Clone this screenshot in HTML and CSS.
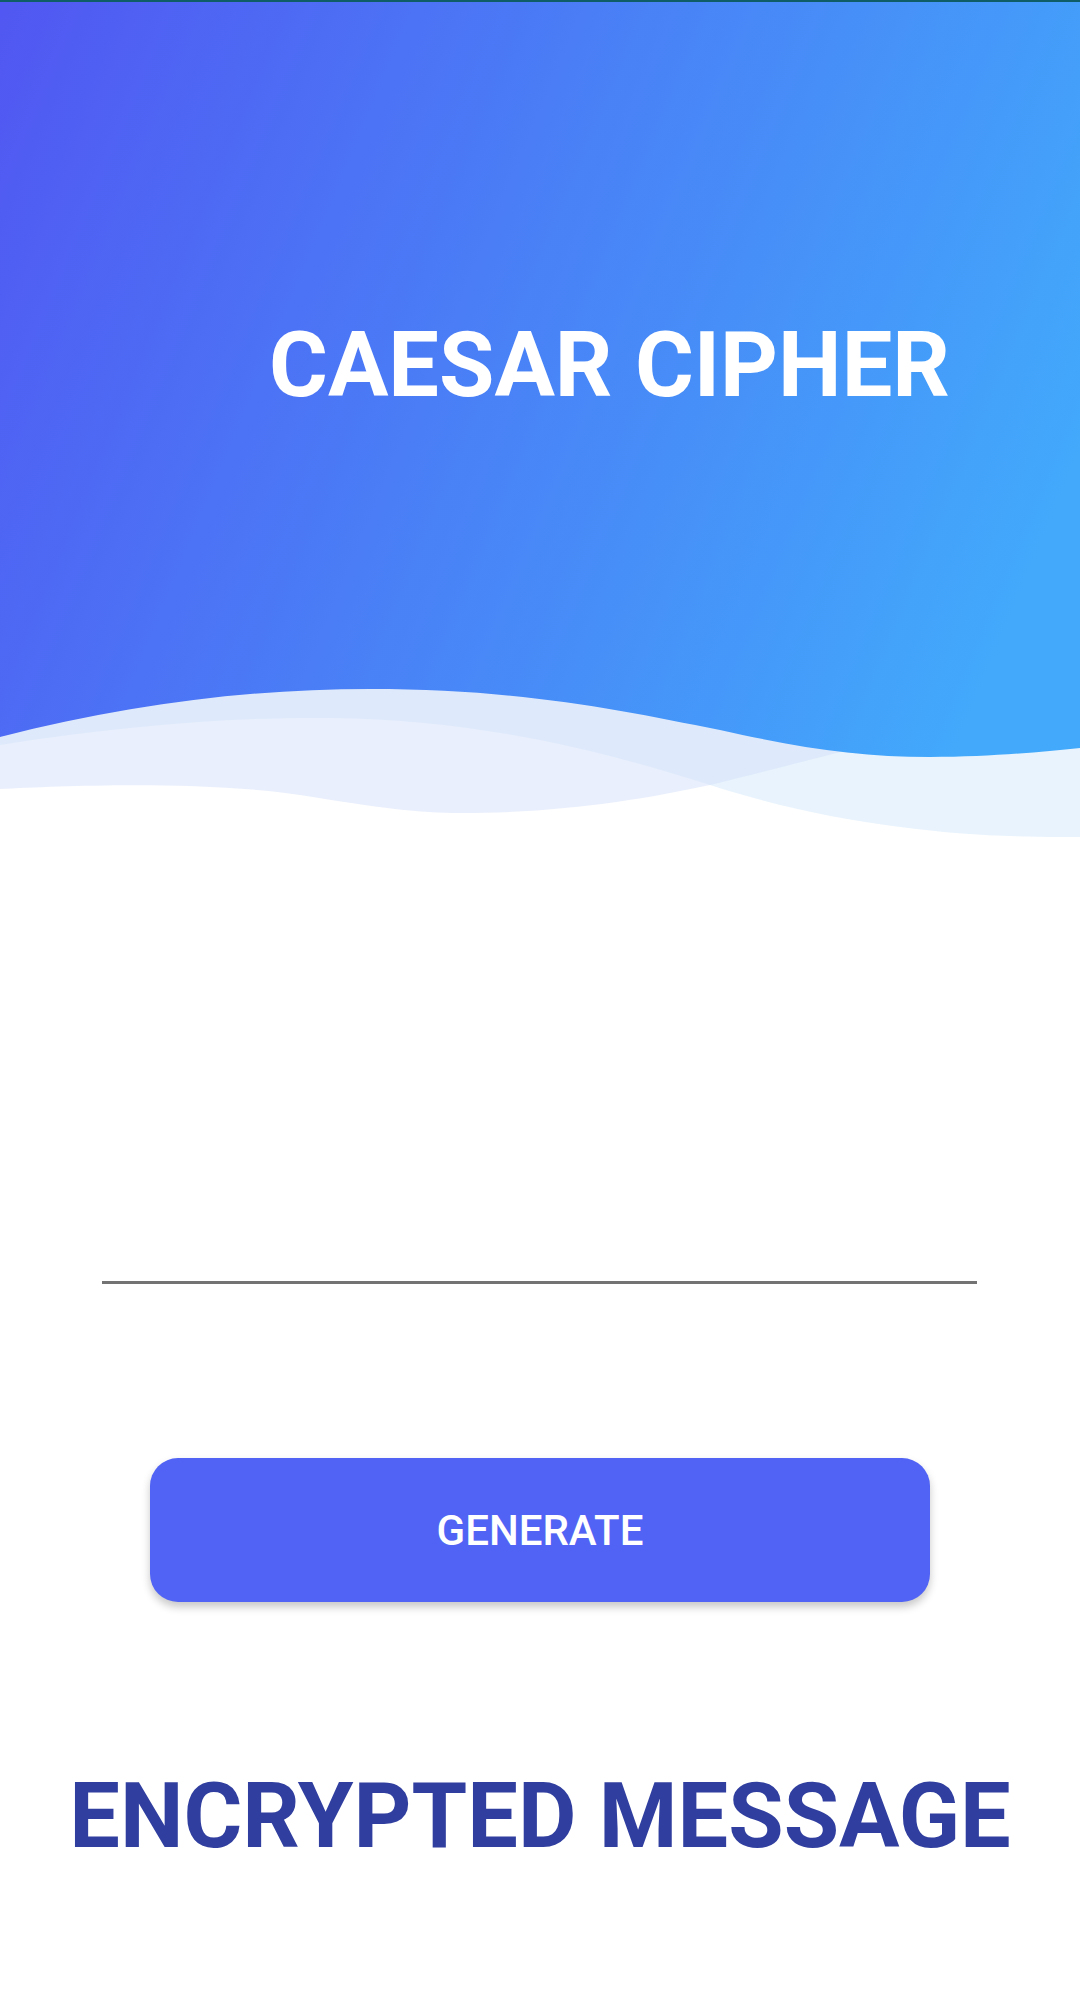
FILE: index.html
```html
<!DOCTYPE html>
<html>
<head>
<meta charset="utf-8">
<title>Caesar Cipher</title>
<link rel="stylesheet" href="styles.css">
</head>
<body>
<div class="statusline"></div>
<header class="hero">
  <svg class="hero-bg" width="1080" height="858" viewBox="0 2 1080 858" xmlns="http://www.w3.org/2000/svg">
    <defs>
      <linearGradient id="g" gradientUnits="userSpaceOnUse" x1="0" y1="0" x2="1080" y2="450">
        <stop offset="0" stop-color="#5157F2"/>
        <stop offset="1" stop-color="#42A9FB"/>
      </linearGradient>
    </defs>
    <path d="M0,600 L1080,600 L1080,837 C980,838 850,830 710,785 C600,750 480,720 330,718 C230,717 120,726 0,745 Z" fill="#d2e8fc" fill-opacity="0.5"/>
    <path d="M0,600 L1080,600 L1080,650 C960,700 880,740 840,752 C800,762 760,773 710,785 C640,800 560,813 460,813 C420,813 380,808 300,795 C200,780 60,786 0,789 Z" fill="#d3e0fa" fill-opacity="0.5"/>
    <path d="M0,0 L1080,0 L1080,748 C1040,752 990,757 930,757 C860,757 800,748 720,730 C620,710 520,689 370,689 C250,689 130,704 0,737 Z" fill="url(#g)"/>
  </svg>
  <h1 class="title">CAESAR CIPHER</h1>
</header>
<main class="content">
  <div class="field"><input class="field-input" type="text" aria-label="Message"></div>
  <button class="btn">GENERATE</button>
  <h2 class="result-title">ENCRYPTED MESSAGE</h2>
</main>
</body>
</html>
```

FILE: styles.css
```css
html, body {
  margin: 0;
  padding: 0;
  background: #ffffff;
}
body {
  width: 1080px;
  min-height: 2010px;
  font-family: Roboto, "Noto Sans", "Liberation Sans", sans-serif;
  overflow: hidden;
}
.statusline {
  height: 2px;
  background: #0f5d66;
}
.hero {
  display: grid;
  height: 858px;
}
.hero-bg {
  grid-area: 1 / 1;
  display: block;
}
.title {
  grid-area: 1 / 1;
  align-self: start;
  margin: 0;
  padding: 311px 0 0 269px;
  font-size: 90px;
  line-height: 106px;
  font-weight: 700;
  color: #ffffff;
  white-space: nowrap;
}
.content {
  display: flex;
  flex-direction: column;
  align-items: flex-start;
}
.field {
  margin: 324px 0 0 102px;
  width: 875px;
  height: 97px;
  border-bottom: 3px solid #737373;
}
.field-input {
  width: 100%;
  height: 100%;
  border: 0;
  outline: none;
  background: transparent;
  font-family: inherit;
  font-size: 44px;
  padding: 0;
}
.btn {
  margin: 174px 0 0 150px;
  width: 780px;
  height: 144px;
  border: 0;
  border-radius: 28px;
  background: #5063F4;
  color: #ffffff;
  font-family: inherit;
  font-size: 42px;
  font-weight: 500;
  letter-spacing: 0;
  box-shadow: 0 5px 9px rgba(0, 0, 0, 0.22);
}
.result-title {
  align-self: center;
  margin: 162px 0 0 0;
  font-size: 90px;
  line-height: 106px;
  font-weight: 700;
  color: #303F9F;
  white-space: nowrap;
}
```
